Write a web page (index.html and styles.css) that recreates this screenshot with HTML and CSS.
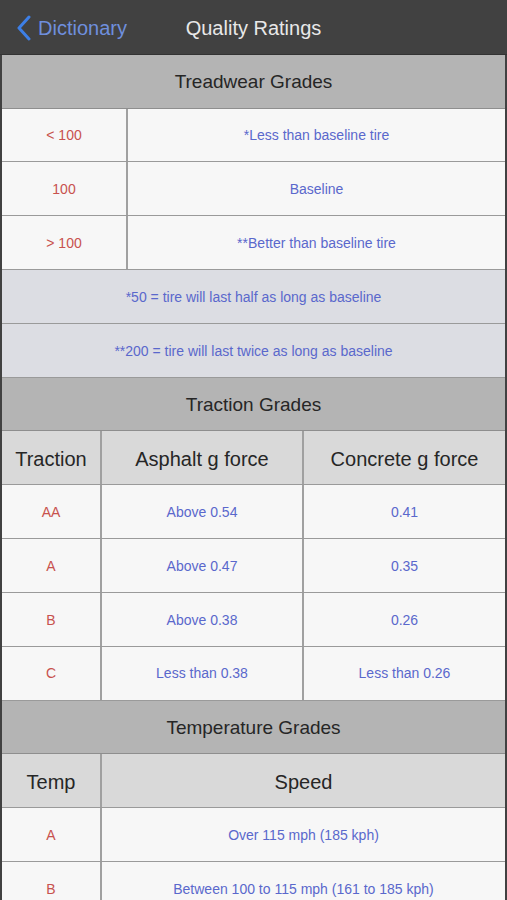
FILE: index.html
```html
<!DOCTYPE html>
<html>
<head>
<meta charset="utf-8">
<link rel="stylesheet" href="styles.css">
</head>
<body>
<div class="nav">
  <div class="back">
    <svg class="chev" width="16" height="26" viewBox="0 0 16 26"><path d="M13 2 L3 13 L13 24" fill="none" stroke="#3d7fe6" stroke-width="3" stroke-linecap="round" stroke-linejoin="round"/></svg>
    <span>Dictionary</span>
  </div>
  <div class="title">Quality Ratings</div>
</div>
<div class="table">
  <div class="sec">Treadwear Grades</div>
  <div class="row tw"><div class="c red">&lt; 100</div><div class="c blue">*Less than baseline tire</div></div>
  <div class="row tw"><div class="c red">100</div><div class="c blue">Baseline</div></div>
  <div class="row tw"><div class="c red">&gt; 100</div><div class="c blue">**Better than baseline tire</div></div>
  <div class="row note"><div class="c blue">*50 = tire will last half as long as baseline</div></div>
  <div class="row note"><div class="c blue">**200 = tire will last twice as long as baseline</div></div>
  <div class="sec">Traction Grades</div>
  <div class="row tr head"><div class="c">Traction</div><div class="c">Asphalt g force</div><div class="c">Concrete g force</div></div>
  <div class="row tr"><div class="c red">AA</div><div class="c blue">Above 0.54</div><div class="c blue">0.41</div></div>
  <div class="row tr"><div class="c red">A</div><div class="c blue">Above 0.47</div><div class="c blue">0.35</div></div>
  <div class="row tr"><div class="c red">B</div><div class="c blue">Above 0.38</div><div class="c blue">0.26</div></div>
  <div class="row tr"><div class="c red">C</div><div class="c blue">Less than 0.38</div><div class="c blue">Less than 0.26</div></div>
  <div class="sec">Temperature Grades</div>
  <div class="row tp head"><div class="c">Temp</div><div class="c">Speed</div></div>
  <div class="row tp"><div class="c red">A</div><div class="c blue">Over 115 mph (185 kph)</div></div>
  <div class="row tp"><div class="c red">B</div><div class="c blue">Between 100 to 115 mph (161 to 185 kph)</div></div>
</div>
</body>
</html>
```
FILE: styles.css
```css
* { box-sizing: border-box; }
html, body {
  margin: 0;
  padding: 0;
  background: #414141;
  font-family: "Liberation Sans", Arial, sans-serif;
}
.nav {
  height: 55px;
  background: #414141;
  border-bottom: 1px solid #333;
  position: relative;
  display: flex;
  align-items: center;
  justify-content: center;
}
.back {
  position: absolute;
  left: 16px;
  top: 15px;
  display: flex;
  align-items: center;
  gap: 6px;
  color: #6f8fdd;
  font-size: 20px;
}
.title {
  color: #e8e8e8;
  font-size: 20px;
  padding-top: 3px;
}
.table {
  margin: 0 2px;
  background: #f7f7f7;
}
.sec {
  height: 53.5px;
  background: #b4b4b4;
  border-bottom: 1px solid #8e8e8e;
  display: flex;
  align-items: center;
  justify-content: center;
  color: #262626;
  font-size: 19px;
  padding-top: 1px;
}
.row {
  height: 53.9px;
  display: grid;
  border-bottom: 1px solid #9a9a9a;
  background: #f7f7f7;
}
.row.tw { grid-template-columns: 126px 1fr; }
.row.tr { grid-template-columns: 100px 202px 1fr; }
.row.tp { grid-template-columns: 100px 1fr; }
.row.note { grid-template-columns: 1fr; background: #dcdde3; }
.row.head { background: #d9d9d9; }
.c {
  display: flex;
  align-items: center;
  justify-content: center;
  font-size: 14px;
  border-right: 2px solid #a0a0a0;
}
.c:last-child { border-right: none; }
.head .c { font-size: 20px; color: #262626; padding-top: 3px; }
.red { color: #c8524e; }
.blue { color: #5a68cc; }
```
